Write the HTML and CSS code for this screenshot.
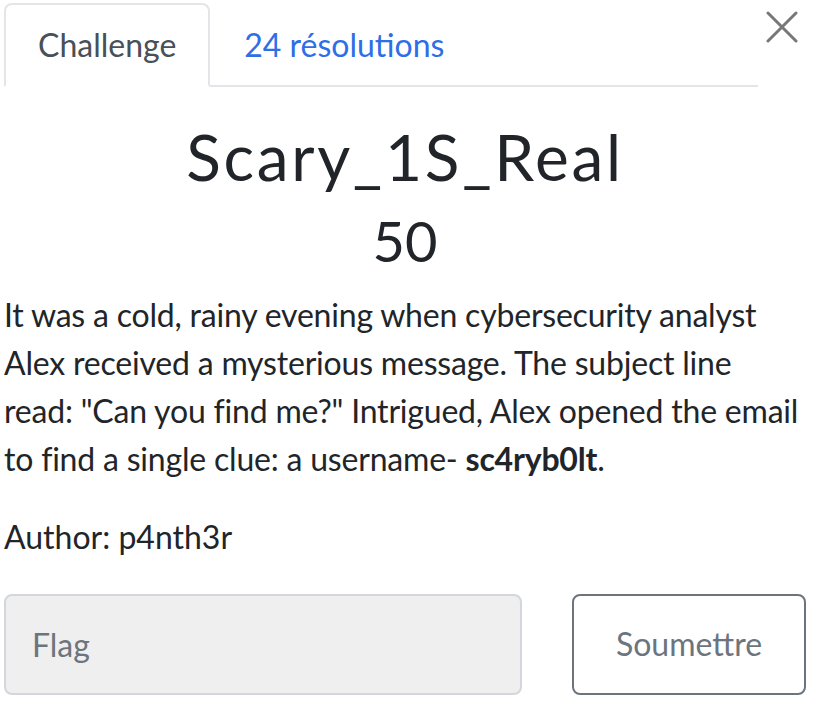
FILE: index.html
```html
<!DOCTYPE html>
<html lang="fr">
<head>
<meta charset="utf-8">
<title>Scary_1S_Real</title>
<link rel="stylesheet" href="styles.css">
</head>
<body>
<div class="modal">
  <div class="header">
    <ul class="tabs">
      <li class="tab active">Challenge</li>
      <li class="tab link">24 résolutions</li>
    </ul>
    <button class="close" aria-label="Fermer">
      <svg width="32" height="32" viewBox="0 0 32 32"><path d="M2 2 L30 30 M30 2 L2 30" stroke="#777" stroke-width="3" stroke-linecap="round" fill="none"/></svg>
    </button>
  </div>
  <div class="content">
    <h2 class="name">Scary_1S_Real</h2>
    <h3 class="value">50</h3>
    <p class="desc">It was a cold, rainy evening when cybersecurity analyst Alex received a mysterious message. The subject line read: "Can you find me?" Intrigued, Alex opened the email to find a single clue: a username- <strong>sc4ryb0lt</strong>.</p>
    <p class="author">Author: p4nth3r</p>
    <form class="submit-row">
      <input class="flag" type="text" placeholder="Flag">
      <button class="submit" type="button">Soumettre</button>
    </form>
  </div>
</div>
</body>
</html>
```
FILE: styles.css
```css
* { box-sizing: border-box; }
html, body { margin: 0; padding: 0; background: #fff; }
body {
  font-family: "Lato", "Liberation Sans", sans-serif;
  font-size: 32px;
  line-height: 48px;
  color: #212529;
}
.modal { padding: 3px 14px 0 4px; }
.header { display: flex; align-items: flex-start; }
.tabs {
  flex: 1;
  display: flex;
  list-style: none;
  margin: 0;
  padding: 0;
  border-bottom: 2px solid #e3e5e8;
}
.tab {
  padding: 16px 32px;
  border: 2px solid transparent;
  border-radius: 8px 8px 0 0;
  margin-bottom: -2px;
}
.tab.active {
  color: #495057;
  border-color: #e3e5e8 #e3e5e8 #fff;
  background: #fff;
}
.tab.link { color: #2e6ee6; }
.close {
  width: 48px;
  height: 48px;
  margin-top: 0;
  padding: 0;
  border: 0;
  background: none;
  display: flex;
  align-items: center;
  justify-content: center;
}
.content { padding-top: 32px; }
.name {
  margin: 0 0 11px;
  text-align: center;
  font-size: 64px;
  line-height: 1.2;
  font-weight: 400;
  letter-spacing: 2.7px;
}
.value {
  margin: 0 0 17px;
  text-align: center;
  font-size: 56px;
  line-height: 1.2;
  font-weight: 400;
}
.desc { margin: 0 0 30px; letter-spacing: -0.2px; }
.desc strong { font-weight: 700; }
.author { margin: 0 0 33px; }
.submit-row { display: flex; gap: 50px; margin: 0; }
.flag {
  width: 518px;
  height: 101px;
  padding: 0 26px;
  font: inherit;
  color: #495057;
  background: #efefef;
  border: 2px solid #d3d7db;
  border-radius: 8px;
}
.flag::placeholder { color: #6c757d; }
.submit {
  flex: 1;
  height: 101px;
  font: inherit;
  color: #6c757d;
  background: #fff;
  border: 2px solid #6c757d;
  border-radius: 8px;
}
```
